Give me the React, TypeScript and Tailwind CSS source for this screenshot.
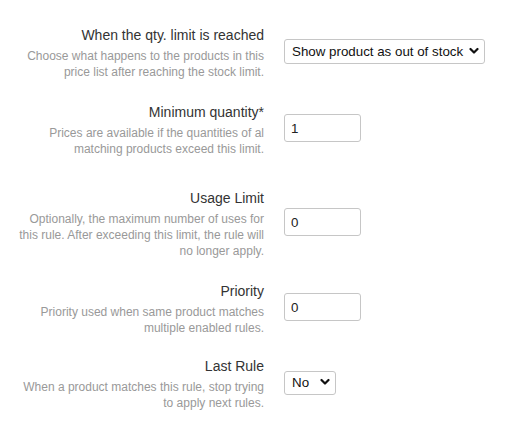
import { useState } from "react";

type Row = {
  label: string;
  help: string;
  kind: "select" | "input";
  value: string;
  options?: string[];
  width: string;
  gap: string;
};

const rows: Row[] = [
  {
    label: "When the qty. limit is reached",
    help: "Choose what happens to the products in this price list after reaching the stock limit.",
    kind: "select",
    value: "Show product as out of stock",
    options: ["Show product as out of stock", "Hide product", "Use regular price"],
    width: "w-[201px] h-[25px]",
    gap: "mt-[25px]",
  },
  {
    label: "Minimum quantity*",
    help: "Prices are available if the quantities of al matching products exceed this limit.",
    kind: "input",
    value: "1",
    width: "w-[77px] h-[28px]",
    gap: "mt-[22px]",
  },
  {
    label: "Usage Limit",
    help: "Optionally, the maximum number of uses for this rule. After exceeding this limit, the rule will no longer apply.",
    kind: "input",
    value: "0",
    width: "w-[77px] h-[28px]",
    gap: "mt-[31px]",
  },
  {
    label: "Priority",
    help: "Priority used when same product matches multiple enabled rules.",
    kind: "input",
    value: "0",
    width: "w-[77px] h-[28px]",
    gap: "mt-[22px]",
  },
  {
    label: "Last Rule",
    help: "When a product matches this rule, stop trying to apply next rules.",
    kind: "select",
    value: "No",
    options: ["No", "Yes"],
    width: "w-[52px] h-[24px]",
    gap: "mt-[20px]",
  },
];

function Chevron() {
  return (
    <svg width="10" height="7" viewBox="0 0 10 7" className="pointer-events-none absolute right-[6px] top-1/2 -translate-y-1/2">
      <polyline points="1.5,1.5 5,5 8.5,1.5" fill="none" stroke="#111" strokeWidth="2.2" strokeLinecap="round" strokeLinejoin="round" />
    </svg>
  );
}

function Field({ row }: { row: Row }) {
  const [value, setValue] = useState(row.value);
  if (row.kind === "select") {
    return (
      <div className={`relative mb-[3px] ${row.width}`}>
        <select
          value={value}
          onChange={(e) => setValue(e.target.value)}
          className="h-full w-full appearance-none rounded-[3px] border border-[#c6c6c6] bg-white pl-[7px] pr-[16px] font-['Liberation_Sans',Arial,sans-serif] text-[13.33px] text-[#111] outline-none"
        >
          {row.options?.map((o) => (
            <option key={o}>{o}</option>
          ))}
        </select>
        <Chevron />
      </div>
    );
  }
  return (
    <input
      value={value}
      onChange={(e) => setValue(e.target.value)}
      className={`mb-[3px] ${row.width} rounded-[3px] border border-[#c6c6c6] bg-white px-[6px] font-['Liberation_Sans',Arial,sans-serif] text-[13.33px] text-[#222] outline-none`}
    />
  );
}

export default function App() {
  return (
    <div className="min-h-[431px] w-[521px] bg-white font-['Liberation_Sans',Arial,sans-serif]">
      <div className="flex flex-col">
        {rows.map((row) => (
          <div key={row.label} className={`flex items-center gap-[20px] ${row.gap}`}>
            <div className="ml-[18px] w-[246px] text-right">
              <div className="text-[14px] leading-[20px] text-[#333]">{row.label}</div>
              <div className="mt-[3px] text-[12px] leading-[16px] text-[#999]">{row.help}</div>
            </div>
            <Field row={row} />
          </div>
        ))}
      </div>
    </div>
  );
}
